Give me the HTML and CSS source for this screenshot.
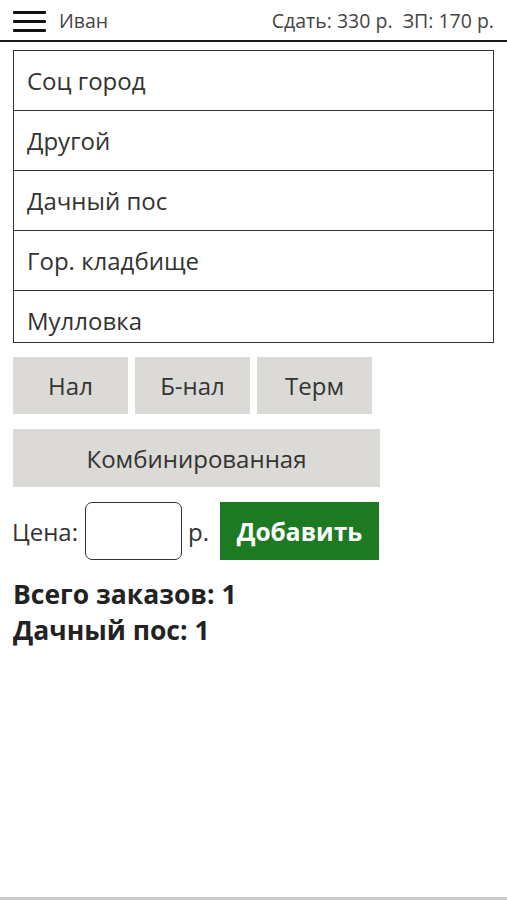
FILE: index.html
```html
<!DOCTYPE html>
<html lang="ru">
<head>
<meta charset="utf-8">
<title>Заказы</title>
<link rel="stylesheet" href="styles.css">
</head>
<body>
<header class="topbar">
  <div class="burger"><span></span><span></span><span></span></div>
  <div class="user">Иван</div>
  <div class="totals">Сдать: 330 р.&nbsp;&nbsp;ЗП: 170 р.</div>
</header>
<div class="list">
  <div class="row">Соц город</div>
  <div class="row">Другой</div>
  <div class="row">Дачный пос</div>
  <div class="row">Гор. кладбище</div>
  <div class="row">Мулловка</div>
</div>
<div class="pay">
  <button class="btn">Нал</button>
  <button class="btn">Б-нал</button>
  <button class="btn">Терм</button>
</div>
<button class="btn wide">Комбинированная</button>
<div class="price">
  <span class="label">Цена:</span>
  <input class="input" type="text">
  <span class="cur">р.</span>
  <button class="add">Добавить</button>
</div>
<div class="summary">
  <div>Всего заказов: 1</div>
  <div>Дачный пос: 1</div>
</div>
<div class="scroll"></div>
</body>
</html>
```
FILE: styles.css
```css
* { box-sizing: border-box; }
html, body { margin: 0; padding: 0; background: #fff; }
body { font-family: "Open Sans", "Noto Sans", sans-serif; color: #333; }

.topbar {
  display: flex;
  align-items: center;
  height: 42px;
  padding: 0 13px;
  border-bottom: 2px solid #1a1a1a;
}
.burger {
  width: 33px;
  display: flex;
  flex-direction: column;
  gap: 6px;
  margin-top: 2px;
}
.burger span { display: block; height: 3px; background: #111; border-radius: 1px; }
.user { font-size: 19.5px; margin-left: 13px; color: #444; }
.totals { margin-left: auto; font-size: 19.5px; color: #444; }

.list {
  margin: 8px 13px 0;
  height: 293px;
  overflow: hidden;
  border: 1px solid #333;
}
.row {
  height: 60px;
  display: flex;
  align-items: center;
  padding-left: 13px;
  font-size: 24px;
  border-bottom: 1px solid #333;
}

.pay {
  display: flex;
  gap: 7px;
  margin: 14px 13px 0;
}
.btn {
  font-family: inherit;
  font-size: 24px;
  color: #333;
  background: #dcdad6;
  border: none;
  width: 115px;
  height: 57px;
  padding: 0;
}
.wide {
  display: block;
  width: 367px;
  height: 58px;
  margin: 15px 13px 0;
}

.price {
  display: flex;
  align-items: center;
  margin: 15px 0 0 12px;
  height: 58px;
}
.label { font-size: 24px; }
.input {
  width: 97px;
  height: 58px;
  margin-left: 7px;
  border: 1.5px solid #333;
  border-radius: 7px;
  font-size: 20px;
}
.cur { font-size: 24px; margin-left: 6px; }
.add {
  margin-left: 11px;
  width: 159px;
  height: 58px;
  background: #1d7a22;
  color: #fff;
  border: none;
  font-family: inherit;
  font-weight: 700;
  font-size: 24.5px;
  padding: 0;
}

.summary {
  margin: 16px 0 0 13px;
  font-size: 26.5px;
  font-weight: 700;
  line-height: 36px;
  color: #222;
}
.scroll {
  position: fixed;
  left: 0;
  right: 0;
  bottom: 0;
  height: 3px;
  background: #c9c9c9;
}
```
